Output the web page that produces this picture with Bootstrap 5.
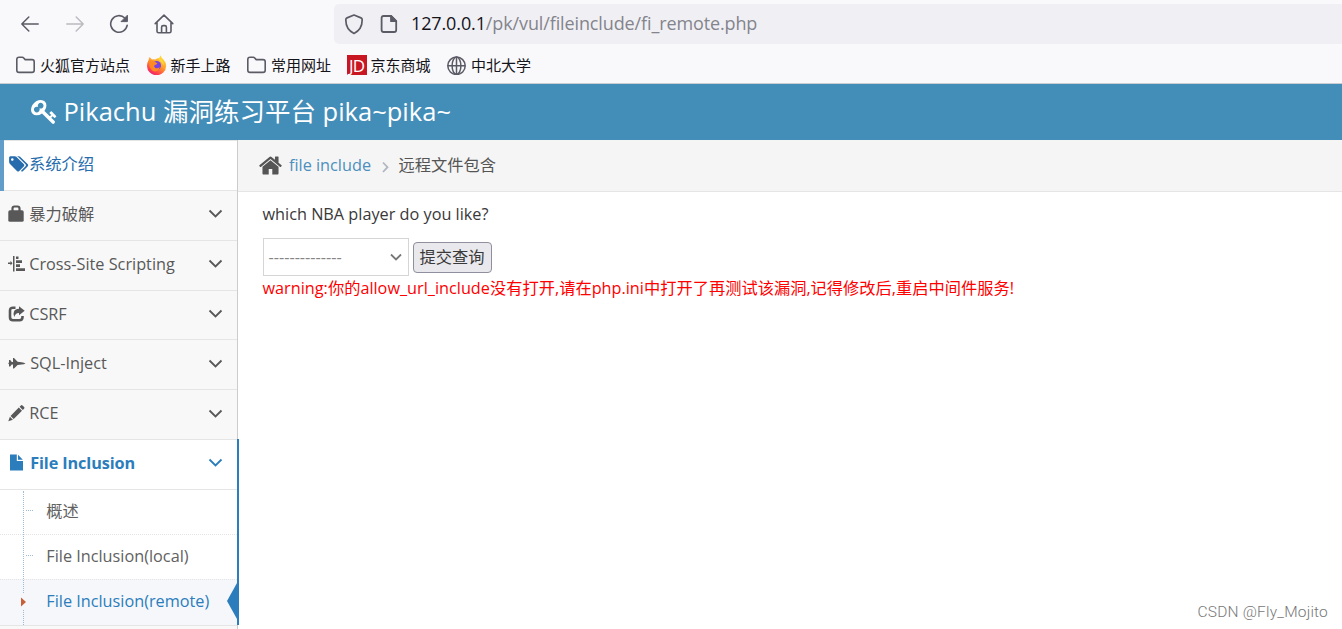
<!DOCTYPE html>
<html lang="zh-CN">

<head>
    <meta charset="UTF-8">
    <meta name="viewport" content="width=device-width, initial-scale=1.0">
    <title>Get the pikachu</title>
    <link href="https://cdn.jsdelivr.net/npm/bootstrap@5.3.0/dist/css/bootstrap.min.css" rel="stylesheet">
    <style>
        body {
            height: 629px;
            font-family: "Open Sans", "Noto Sans CJK SC", sans-serif;
            font-size: 16.25px;
            line-height: 24px;
            color: #393939;
            background-color: #fff;
        }

        svg {
            display: block;
            flex: none;
        }

        a {
            text-decoration: none;
            color: inherit;
        }

        /* browser bars */
        .toolbar {
            height: 48px;
            background-color: #f9f9fb;
            padding-left: 20px;
            color: #5b5b66;
        }

        .tool-buttons {
            gap: 24.7px;
            width: 314px;
        }

        .url-bar {
            height: 40px;
            margin-top: -1px;
            padding-left: 10px;
            background-color: #f0f0f4;
            border-radius: 5px 0 0 5px;
            font-size: 18px;
            color: #84848c;
        }

        .url-text {
            margin-left: 13px;
            padding-bottom: 2px;
            letter-spacing: -.12px;
        }

        .url-host {
            color: #15141a;
        }

        .bookmarks {
            height: 36px;
            padding: 0 0 1px 15px;
            gap: 15.5px;
            background-color: #f9f9fb;
            border-bottom: 1px solid #cccdd2;
            font-size: 15px;
            color: #15141a;
        }

        .bookmark {
            gap: 4px;
            white-space: nowrap;
        }

        .jd {
            width: 20px;
            height: 20px;
            background-color: #c91623;
            color: #fff;
            font: 17px/21px "Open Sans", sans-serif;
            letter-spacing: -1px;
        }

        /* page header */
        .page-top {
            height: 56px;
            padding: 0 0 2px 31px;
            gap: 5.5px;
            background-color: #438eb9;
            color: #fff;
            font-size: 25.5px;
        }

        /* side menu */
        .side {
            width: 238px;
            background-color: #f2f2f2;
            border-right: 1px solid #ccc;
            color: #585858;
        }

        .side-list {
            border-top: 1px solid #e5e5e5;
            padding-top: .2px;
        }

        .side-item {
            height: 49.8px;
            padding: 0 14px 2.8px 8px;
            background-color: #f8f8f8;
            border-bottom: 1px solid #e5e5e5;
        }

        .side-item svg:first-child {
            margin-right: 4.2px;
        }

        .side-item .chevron {
            margin-top: 1px;
        }

        .side-item.hovered {
            position: relative;
            background-color: #fff;
            color: #266cad;
        }

        .side-item.hovered svg {
            margin-right: 0;
        }

        .side-item.hovered::before {
            content: "";
            position: absolute;
            left: 0;
            top: -1px;
            bottom: -1px;
            width: 4px;
            background-color: #629cc9;
        }

        .open-group {
            position: relative;
            color: #2b7dbc;
        }

        .open-group::after {
            content: "";
            position: absolute;
            top: -1px;
            bottom: 0;
            right: -2px;
            width: 2px;
            background-color: #2b7dbc;
        }

        .open-group .side-item {
            background-color: #fff;
            font-weight: 700;
            letter-spacing: -.12px;
        }

        .sub-list {
            position: relative;
            background-color: #fff;
            color: #616161;
        }

        .sub-list::before {
            content: "";
            position: absolute;
            z-index: 1;
            left: 23px;
            top: 1px;
            bottom: 0;
            border-left: 1px dotted #9dbdd6;
        }

        .sub-item {
            position: relative;
            height: 45px;
            padding: 0 0 2px 46.3px;
        }

        .sub-item:first-child {
            height: 44px;
        }

        .sub-item + .sub-item {
            border-top: 1px dotted #e4e4e4;
        }

        .sub-item::before {
            content: "";
            position: absolute;
            left: 26px;
            top: 20px;
            width: 7px;
            border-top: 1px dotted #9dbdd6;
        }

        .sub-item.current {
            background-color: #f5f7fa;
            color: #2b7dbc;
            height: 46px;
        }

        .sub-item.current::before {
            display: none;
        }

        .sub-item .caret-mark {
            position: absolute;
            z-index: 2;
            left: 19px;
            top: 14px;
            background-color: #f5f7fa;
        }

        .sub-item .pointer {
            position: absolute;
            right: 0;
            top: 3px;
        }

        .side-rest {
            border-top: 1px solid #e5e5e5;
            background-color: #f8f8f8;
        }

        /* content */
        .crumbs {
            height: 52px;
            padding: 0 0 1px 20px;
            background-color: #f5f5f5;
            border-bottom: 1px solid #e5e5e5;
            color: #555;
        }

        .crumbs a {
            color: #4c8fbd;
            margin-left: 6px;
        }

        .crumbs .divider {
            margin: 3px 7.500px 0 8px;
        }

        .vul-body {
            padding: 10px 0 0 24.5px;
        }

        .player-select {
            width: 146px;
            height: 38px;
            padding: 0 6px 0 5px;
            border: 1px solid #d5d5d5;
            color: #858585;
        }

        .submit-btn {
            width: 79px;
            height: 31px;
            padding: 0;
            border: 1px solid #8f8f9d;
            border-radius: 4px;
            background-color: #e9e9ed;
            color: #393939;
            font-size: 16.25px;
            line-height: 28px;
        }

        .warn {
            color: #f00;
        }

        .watermark {
            position: absolute;
            right: 14px;
            bottom: 5px;
            font: 300 15.5px/24px Roboto, sans-serif;
            letter-spacing: .2px;
            color: #777;
        }
    </style>
</head>

<body class="d-flex flex-column overflow-hidden position-relative">
    <div class="toolbar d-flex align-items-center">
        <div class="tool-buttons d-flex align-items-center">
            <svg width="20" height="20" viewBox="0 0 20 20" fill="none" stroke="#5b5b66" stroke-width="1.5" stroke-linecap="round" stroke-linejoin="round"><path d="M18.2 10H1.8M8.8 3L1.8 10l7 7"/></svg>
            <svg width="20" height="20" viewBox="0 0 20 20" fill="none" stroke="#bbbbc0" stroke-width="1.5" stroke-linecap="round" stroke-linejoin="round"><path d="M1.8 10h16.4M11.2 3l7 7-7 7"/></svg>
            <svg width="20" height="20" viewBox="0 0 20 20" fill="none" stroke="#5b5b66" stroke-width="1.6" stroke-linecap="round"><path d="M18.2 11.2A8.3 8.3 0 1 1 15.8 4"/><path d="M18.4 1.6v6h-6z" fill="#5b5b66" stroke-width="1" stroke-linejoin="round"/></svg>
            <svg width="20" height="20" viewBox="0 0 20 20" fill="none" stroke="#5b5b66" stroke-width="1.6" stroke-linecap="round" stroke-linejoin="round"><path d="M1.2 9.6L10 1.2l8.8 8.4M3 8.5v8.7q0 1.6 1.6 1.6h10.8q1.6 0 1.6-1.6V8.5M7.6 18.5v-5.3q0-1.6 1.6-1.6h1.6q1.6 0 1.6 1.6v5.3"/></svg>
        </div>
        <div class="url-bar d-flex align-items-center flex-grow-1">
            <svg width="20" height="22" viewBox="0 0 20 22" fill="none" stroke="#5b5b66" stroke-width="1.7" stroke-linejoin="round"><path d="M10 2l7 2.900q1.200.5 1.200 1.800C18.200 13 15 18 10 20.400C5 18 1.800 13 1.800 6.700Q1.800 5.400 3 4.900z"/></svg>
            <svg class="ms-3" width="18" height="20" viewBox="0 0 18 20" fill="none" stroke="#5b5b66" stroke-width="1.8" stroke-linejoin="round"><path d="M3.600 2h7.400l5.200 5.200V16q0 2-2 2H3.600q-2 0-2-2V4q0-2 2-2z"/><path d="M11 2v5.200h5.200z" fill="#5b5b66"/></svg>
            <span class="url-text"><span class="url-host">127.0.0.1</span>/pk/vul/fileinclude/fi_remote.php</span>
        </div>
    </div>

    <div class="bookmarks d-flex align-items-center">
        <div class="bookmark d-flex align-items-center">
            <svg width="21" height="20" viewBox="0 0 21 20" fill="none" stroke="#5b5b66" stroke-width="1.6" stroke-linejoin="round"><path d="M1.800 4.400q0-2.200 2.200-2.200h3.300q.8 0 1.400.7l1.500 1.700h6.800q2.200 0 2.200 2.200v8.400q0 2.200-2.200 2.200H4q-2.200 0-2.200-2.200z"/></svg>
            <span>火狐官方站点</span>
        </div>
        <div class="bookmark d-flex align-items-center">
            <svg width="21" height="20" viewBox="0 0 21 20">
                <defs>
                    <linearGradient id="fox" x1=".8" y1="0" x2=".2" y2="1"><stop offset="0" stop-color="#ffe83c"/><stop offset=".45" stop-color="#ff9a2a"/><stop offset=".8" stop-color="#ff3f4d"/><stop offset="1" stop-color="#e31587"/></linearGradient>
                </defs>
                <path d="M14.500.2q1 3 3.200 4.500 2.600 3 2.400 6.300A9.500 9.200 0 0 1 1 11q0-3.200 1.400-5.500L3.600 2l2.300 2.400q1.800-.4 3.300.1 1.800-1.700 4-1.500z" fill="url(#fox)"/>
                <circle cx="10.600" cy="10.400" r="4.400" fill="#7542e5"/>
                <path d="M3 7q3-2.500 6-.2l2.500 1.700q-.8 1.300-2.700 1.400-1.500 1.200.2 2.800 2.600 1.400 4.600-.7-1 5-5.600 4.300Q3.500 15 3 7z" fill="#ff8a24"/>
                <path d="M12.500 3q6 1.500 5 8-.5-2.500-2.600-4.200Q12.600 5.500 12.500 3z" fill="#ffd83a"/>
            </svg>
            <span>新手上路</span>
        </div>
        <div class="bookmark d-flex align-items-center">
            <svg width="21" height="20" viewBox="0 0 21 20" fill="none" stroke="#5b5b66" stroke-width="1.6" stroke-linejoin="round"><path d="M1.800 4.400q0-2.200 2.200-2.200h3.300q.8 0 1.400.7l1.500 1.700h6.800q2.200 0 2.200 2.200v8.400q0 2.200-2.200 2.200H4q-2.200 0-2.200-2.200z"/></svg>
            <span>常用网址</span>
        </div>
        <div class="bookmark d-flex align-items-center">
            <span class="jd text-center">JD</span>
            <span>京东商城</span>
        </div>
        <div class="bookmark d-flex align-items-center">
            <svg width="21" height="20" viewBox="0 0 21 20" fill="none" stroke="#5b5b66" stroke-width="1.5"><circle cx="10.500" cy="10.800" r="8.700"/><ellipse cx="10.500" cy="10.800" rx="4.400" ry="8.700"/><path d="M10.500 2.100v17.400M1.800 10.800h17.400"/></svg>
            <span>中北大学</span>
        </div>
    </div>

    <header class="page-top d-flex align-items-center">
        <svg width="27" height="27" viewBox="0 0 1792 1792" fill="#fff"><path d="M832 512q0-80-56-136t-136-56-136 56-56 136q0 42 19 83-41-19-83-19-80 0-136 56t-56 136 56 136 136 56 136-56 56-136q0-42-19-83 41 19 83 19 80 0 136-56t56-136zm851 704q0 17-49 66t-66 49q-9 0-28.500-16t-36.500-33-38.500-40-24.500-26l-96 96 220 220q28 28 28 68 0 42-39 81t-81 39q-40 0-68-28l-671-671q-176 131-365 131-163 0-265.500-102.500t-102.500-265.500q0-160 95-313t248-248 313-95q163 0 265.500 102.500t102.500 265.500q0 189-131 365l355 355 96-96q-3-3-26-24.500t-40-38.500-33-36.500-16-28.500q0-17 49-66t66-49q13 0 23 10 6 6 46 44.500t82 79.500 86.500 86 73 78 28.500 41z"/></svg>
        <span>Pikachu 漏洞练习平台 pika~pika~</span>
    </header>

    <div class="d-flex flex-grow-1">
        <nav class="side d-flex flex-column flex-shrink-0">
            <div class="side-list">
                <a href="#" class="side-item hovered d-flex align-items-center">
                    <svg width="21" height="18" viewBox="40 0 2048 1792" fill="#266cad"><path d="M576 448q0-53-37.500-90.500t-90.500-37.500-90.500 37.500-37.500 90.500 37.500 90.500 90.500 37.500 90.500-37.500 37.500-90.500zm1067 576q0 53-37 90l-491 492q-39 37-91 37-53 0-90-37l-715-716q-38-37-64.500-101t-26.500-117v-416q0-52 38-90t90-38h416q53 0 117 26.500t102 64.500l715 714q37 39 37 91zm384 0q0 53-37 90l-491 492q-39 37-91 37-36 0-59-14t-53-45l470-470q37-37 37-90 0-52-37-91l-715-714q-38-38-102-64.500t-117-26.500h224q53 0 117 26.500t102 64.500l715 714q37 39 37 91z"/></svg>
                    <span>系统介绍</span>
                </a>
                <a href="#" class="side-item d-flex align-items-center">
                    <svg width="17" height="18" viewBox="0 0 17 18"><path d="M4.500 6V3.500Q4.500 1.500 6.500 1.500h3q2 0 2 2V6" fill="none" stroke="#585858" stroke-width="2.200"/><path d="M2 5.200h12q1.700 0 1.700 1.700v8.300q0 1.500-1.700 1.500H2q-1.700 0-1.700-1.500V6.900Q.3 5.200 2 5.200z" fill="#585858"/></svg>
                    <span>暴力破解</span>
                    <svg class="chevron ms-auto" width="15" height="10" viewBox="0 0 15 10" fill="none" stroke="#585858" stroke-width="1.8"><path d="M1.500 1.500l6 6 6-6"/></svg>
                </a>
                <a href="#" class="side-item d-flex align-items-center">
                    <svg width="17" height="18" viewBox="0 0 17 18" fill="#585858"><path d="M0 7.500h2.500V5.800L4.500 8.200l-2 2.400V8.900H0zM5 1h1.500v15.500H5zM8 1.500h2.500v2.500H8zM8 5.200h6v2.700H8zM8 9.200h4v2.700H8zM8 13.300h9V16H8z"/></svg>
                    <span>Cross-Site Scripting</span>
                    <svg class="chevron ms-auto" width="15" height="10" viewBox="0 0 15 10" fill="none" stroke="#585858" stroke-width="1.8"><path d="M1.500 1.500l6 6 6-6"/></svg>
                </a>
                <a href="#" class="side-item d-flex align-items-center">
                    <svg width="17" height="18" viewBox="0 0 17 18"><path d="M7.500 2.700H5Q2 2.700 2 5.700v6.600q0 3 3 3h6.500q3 0 3-3V11" fill="none" stroke="#585858" stroke-width="2.6"/><path d="M11 1.200l5.700 4.600L11 10.300V7.900Q7.500 7.700 6.300 12 4.800 9 6 6.500q1.200-2.700 5-2.800z" fill="#585858"/></svg>
                    <span>CSRF</span>
                    <svg class="chevron ms-auto" width="15" height="10" viewBox="0 0 15 10" fill="none" stroke="#585858" stroke-width="1.8"><path d="M1.500 1.500l6 6 6-6"/></svg>
                </a>
                <a href="#" class="side-item d-flex align-items-center">
                    <svg width="18" height="18" viewBox="0 0 18 18" fill="#585858"><path d="M1 6h1.200l1.600 2H5V4h1l3.600 3.700 4 .5q2.600.4 3.900 1.200-1.300.8-3.900 1.100l-4 .4L6 14.500H5v-4H3.800l-1.600 2H1v-2.300l-.6-.4V9l.6-.4z"/></svg>
                    <span>SQL-Inject</span>
                    <svg class="chevron ms-auto" width="15" height="10" viewBox="0 0 15 10" fill="none" stroke="#585858" stroke-width="1.8"><path d="M1.500 1.500l6 6 6-6"/></svg>
                </a>
                <a href="#" class="side-item d-flex align-items-center">
                    <svg width="17" height="18" viewBox="0 0 17 18" fill="#585858"><path d="M12.900 1.500q.8-.8 1.600 0l1.600 1.600q.8.8 0 1.600l-1.300 1.300-3.200-3.200zM10.800 3.600L14 6.800l-8.300 8.300-3.200-3.200zM1.900 12.700l3 3L.3 17.200z"/></svg>
                    <span>RCE</span>
                    <svg class="chevron ms-auto" width="15" height="10" viewBox="0 0 15 10" fill="none" stroke="#585858" stroke-width="1.8"><path d="M1.500 1.500l6 6 6-6"/></svg>
                </a>
                <div class="open-group">
                    <a href="#" class="side-item d-flex align-items-center">
                        <svg width="18" height="18" viewBox="0 0 18 18" fill="#2b7dbc"><path d="M2 .5h6.800V7H15v9.500H2zM10 .7l4.800 5H10z"/></svg>
                        <span>File Inclusion</span>
                        <svg class="chevron ms-auto" width="15" height="10" viewBox="0 0 15 10" fill="none" stroke="#2b7dbc" stroke-width="1.8"><path d="M1.500 1.500l6 6 6-6"/></svg>
                    </a>
                    <div class="sub-list">
                        <a href="#" class="sub-item d-flex align-items-center">概述</a>
                        <a href="#" class="sub-item d-flex align-items-center">File Inclusion(local)</a>
                        <a href="#" class="sub-item current d-flex align-items-center">
                            <svg class="caret-mark" width="10" height="16" viewBox="0 0 10 16"><path d="M2 3.500L7 8l-5 4.500z" fill="#c86139"/></svg>
                            File Inclusion(remote)
                            <svg class="pointer" width="10" height="36" viewBox="0 0 10 36"><path d="M10 0v36L0 18z" fill="#2b7dbc"/></svg>
                        </a>
                    </div>
                </div>
            </div>
            <div class="side-rest flex-grow-1"></div>
        </nav>

        <main class="flex-grow-1">
            <div class="crumbs d-flex align-items-center">
                <svg width="25" height="25" viewBox="0 0 1792 1792" fill="#555"><path d="M1472 992v480q0 26-19 45t-45 19h-384v-384h-256v384h-384q-26 0-45-19t-19-45v-480q0-1 .5-3t.5-3l575-474 575 474q1 2 1 6zm223-69l-62 74q-8 9-21 11h-3q-13 0-21-7l-692-577-692 577q-12 8-24 7-13-2-21-11l-62-74q-8-10-7-23.500t11-21.500l719-599q32-26 76-26t76 26l244 204v-195q0-14 9-23t23-9h192q14 0 23 9t9 23v408l219 182q10 8 11 21.500t-7 23.500z"/></svg>
                <a href="#">file include</a>
                <svg class="divider" width="12" height="12" viewBox="0 0 12 12" fill="none" stroke="#b2b6bf" stroke-width="1.8"><path d="M4 1.500l4.500 4.700L4 11"/></svg>
                <span>远程文件包含</span>
            </div>
            <div class="vul-body">
                <div>which NBA player do you like?</div>
                <div class="d-flex align-items-center gap-1 mt-2 pt-1">
                    <div class="player-select d-flex align-items-center justify-content-between">
                        <span>--------------</span>
                        <svg width="12" height="8" viewBox="0 0 12 8" fill="none" stroke="#777" stroke-width="1.8"><path d="M1 1.500l5 5 5-5"/></svg>
                    </div>
                    <button type="button" class="submit-btn">提交查询</button>
                </div>
                <div class="warn">warning:你的allow_url_include没有打开,请在php.ini中打开了再测试该漏洞,记得修改后,重启中间件服务!</div>
            </div>
        </main>
    </div>

    <div class="watermark">CSDN @Fly_Mojito</div>

    <script src="https://cdn.jsdelivr.net/npm/bootstrap@5.3.0/dist/js/bootstrap.bundle.min.js"></script>
</body>

</html>
